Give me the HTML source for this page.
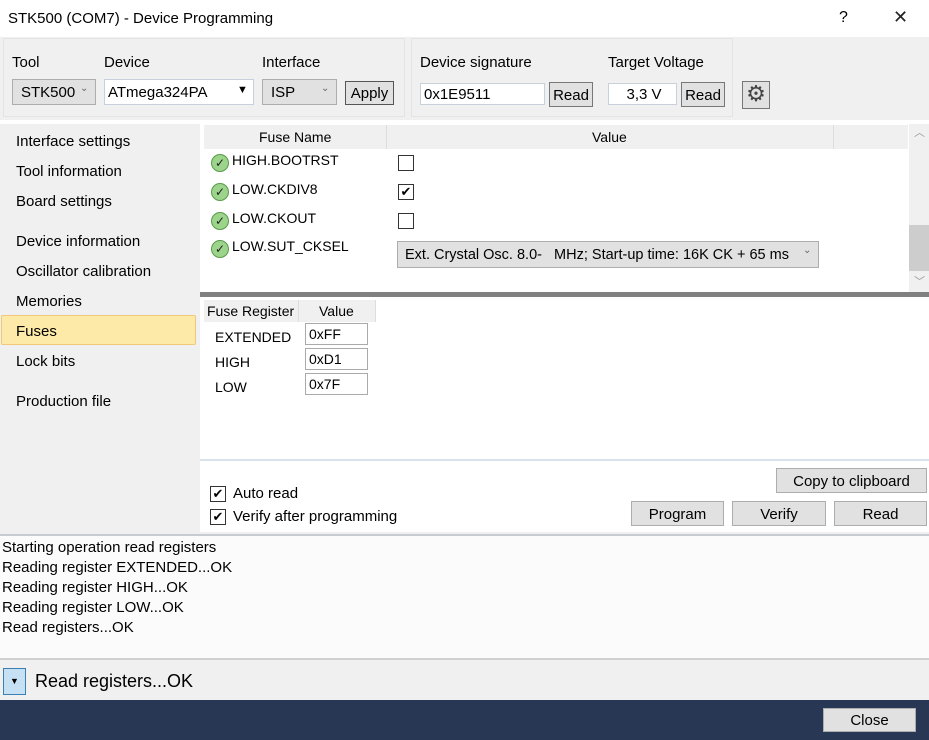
<!DOCTYPE html><html><head><style>
*{margin:0;padding:0;box-sizing:border-box}
body{width:929px;height:740px;position:relative;background:#f0f0f0;font-family:"Liberation Sans",sans-serif;font-size:15px;color:#000;overflow:hidden}
.a{position:absolute;white-space:nowrap}
.s{font-size:14px}
.btn{position:absolute;background:#e1e1e1;border:1px solid #adadad;text-align:center;font-size:15px}
.inp{position:absolute;background:#fff;border:1px solid #c8d0dc;padding-left:3px;font-size:14px}
.cb{position:absolute;width:16px;height:16px;border:1px solid #333;background:#fff;font-size:13px;line-height:14px;text-align:center}
.ok{position:absolute;width:18px;height:18px;border-radius:50%;background:#9bd48a;border:1px solid #5a9a4a;font-size:12px;line-height:16px;text-align:center;color:#222}
</style></head><body>
<div class="a" style="left:0;top:0;width:929px;height:37px;background:#fff"></div>
<div class="a" style="left:8px;top:10px">STK500 (COM7) - Device Programming</div>
<div class="a" style="left:839px;top:9px;font-size:16px">?</div>
<div class="a" style="left:893px;top:7px;font-size:18px;font-weight:300;color:#222">✕</div>

<div class="a" style="left:3px;top:38px;width:402px;height:79px;border:1px solid #e4e4e4"></div>
<div class="a" style="left:411px;top:38px;width:322px;height:79px;border:1px solid #e4e4e4"></div>
<div class="a" style="left:0;top:120px;width:929px;height:4px;background:#fff"></div>
<div class="a" style="left:12px;top:54px">Tool</div>
<div class="a" style="left:104px;top:54px">Device</div>
<div class="a" style="left:262px;top:54px">Interface</div>
<div class="a" style="left:420px;top:54px">Device signature</div>
<div class="a" style="left:608px;top:54px">Target Voltage</div>
<div class="btn" style="left:12px;top:79px;width:84px;height:26px;text-align:left;padding:4px 0 0 8px">STK500 <span style="position:absolute;left:67px;top:3px;font-size:10px;color:#666">⌄</span></div>
<div class="inp" style="left:104px;top:79px;width:150px;height:26px;padding-top:4px;font-size:15px">ATmega324PA<span style="position:absolute;left:132px;top:4px;font-size:11px">▼</span></div>
<div class="btn" style="left:262px;top:79px;width:75px;height:26px;text-align:left;padding:4px 0 0 8px">ISP<span style="position:absolute;left:58px;top:3px;font-size:10px;color:#666">⌄</span></div>
<div class="btn" style="left:345px;top:81px;width:49px;height:24px;border-color:#555;padding-top:3px">Apply</div>
<div class="inp" style="left:420px;top:83px;width:125px;height:22px;padding-top:2px;font-size:15px">0x1E9511</div>
<div class="btn" style="left:549px;top:82px;width:44px;height:25px;border-color:#777;padding-top:4px">Read</div>
<div class="inp" style="left:608px;top:83px;width:69px;height:22px;padding-top:2px;text-align:center;font-size:15px">3,3 V</div>
<div class="btn" style="left:681px;top:82px;width:44px;height:25px;border-color:#777;padding-top:4px">Read</div>
<div class="btn" style="left:742px;top:81px;width:28px;height:28px;border-color:#777;font-size:22px;line-height:24px;color:#444">⚙</div>

<div class="a" style="left:16px;top:133px">Interface settings</div>
<div class="a" style="left:16px;top:163px">Tool information</div>
<div class="a" style="left:16px;top:193px">Board settings</div>
<div class="a" style="left:16px;top:233px">Device information</div>
<div class="a" style="left:16px;top:263px">Oscillator calibration</div>
<div class="a" style="left:16px;top:293px">Memories</div>
<div class="a" style="left:1px;top:315px;width:195px;height:30px;background:#fde9a8;border:1px solid #f0c878;border-radius:2px"></div>
<div class="a" style="left:16px;top:323px">Fuses</div>
<div class="a" style="left:16px;top:353px">Lock bits</div>
<div class="a" style="left:16px;top:393px">Production file</div>

<div class="a" style="left:200px;top:124px;width:729px;height:408px;background:#fff"></div>
<div class="a" style="left:204px;top:125px;width:704px;height:24px;background:#f0f0f0"></div>
<div class="a" style="left:386px;top:125px;width:1px;height:24px;background:#ddd"></div>
<div class="a" style="left:833px;top:125px;width:1px;height:24px;background:#ddd"></div>
<div class="a s" style="left:259px;top:129px">Fuse Name</div>
<div class="a s" style="left:592px;top:129px">Value</div>
<div class="a" style="left:909px;top:124px;width:20px;height:168px;background:#f0f0f0"></div>
<div class="a" style="left:909px;top:225px;width:20px;height:46px;background:#cdcdcd"></div>
<div class="a" style="left:914px;top:124px;font-size:11px;color:#999">︿</div>
<div class="a" style="left:914px;top:273px;font-size:11px;color:#999">﹀</div>

<div class="ok" style="left:211px;top:154px">✓</div><div class="a s" style="left:232px;top:152px">HIGH.BOOTRST</div>
<div class="ok" style="left:211px;top:183px">✓</div><div class="a s" style="left:232px;top:181px">LOW.CKDIV8</div>
<div class="ok" style="left:211px;top:212px">✓</div><div class="a s" style="left:232px;top:210px">LOW.CKOUT</div>
<div class="ok" style="left:211px;top:240px">✓</div><div class="a s" style="left:232px;top:238px">LOW.SUT_CKSEL</div>
<div class="cb" style="left:398px;top:155px"></div>
<div class="cb" style="left:398px;top:184px">✔</div>
<div class="cb" style="left:398px;top:213px"></div>
<div class="btn" style="left:397px;top:241px;width:422px;height:27px;text-align:left;padding:5px 0 0 7px;font-size:14.5px">Ext. Crystal Osc. 8.0-&nbsp;&nbsp; MHz; Start-up time: 16K CK + 65 ms<span style="position:absolute;left:405px;top:3px;font-size:10px;color:#666">⌄</span></div>

<div class="a" style="left:200px;top:292px;width:729px;height:5px;background:#808080"></div>
<div class="a" style="left:204px;top:300px;width:171px;height:22px;background:#f0f0f0"></div>
<div class="a" style="left:298px;top:300px;width:1px;height:22px;background:#ddd"></div>
<div class="a" style="left:375px;top:300px;width:1px;height:22px;background:#ddd"></div>
<div class="a s" style="left:207px;top:303px">Fuse Register</div>
<div class="a s" style="left:319px;top:303px">Value</div>
<div class="a s" style="left:215px;top:329px">EXTENDED</div>
<div class="a s" style="left:215px;top:354px">HIGH</div>
<div class="a s" style="left:215px;top:379px">LOW</div>
<div class="inp" style="left:305px;top:323px;width:63px;height:22px;border-color:#aaa;padding-top:2px">0xFF</div>
<div class="inp" style="left:305px;top:348px;width:63px;height:22px;border-color:#aaa;padding-top:2px">0xD1</div>
<div class="inp" style="left:305px;top:373px;width:63px;height:22px;border-color:#aaa;padding-top:2px">0x7F</div>

<div class="a" style="left:200px;top:459px;width:729px;height:2px;background:#d8e2ec"></div>
<div class="cb" style="left:210px;top:486px">✔</div><div class="a" style="left:233px;top:485px">Auto read</div>
<div class="cb" style="left:210px;top:509px">✔</div><div class="a" style="left:233px;top:508px">Verify after programming</div>
<div class="btn" style="left:776px;top:468px;width:151px;height:25px;padding-top:4px">Copy to clipboard</div>
<div class="btn" style="left:631px;top:501px;width:93px;height:25px;padding-top:4px">Program</div>
<div class="btn" style="left:732px;top:501px;width:94px;height:25px;padding-top:4px">Verify</div>
<div class="btn" style="left:834px;top:501px;width:93px;height:25px;padding-top:4px">Read</div>

<div class="a" style="left:0;top:534px;width:929px;height:126px;background:#fbfbfb;border-top:2px solid #c8ccd2;border-bottom:2px solid #d0d0d0"></div>
<div class="a" style="left:2px;top:539px">Starting operation read registers</div>
<div class="a" style="left:2px;top:559px">Reading register EXTENDED...OK</div>
<div class="a" style="left:2px;top:579px">Reading register HIGH...OK</div>
<div class="a" style="left:2px;top:599px">Reading register LOW...OK</div>
<div class="a" style="left:2px;top:619px">Read registers...OK</div>

<div class="a" style="left:3px;top:668px;width:23px;height:27px;background:#c5e1f3;border:1px solid #3c7fb1;font-size:9px;text-align:center;line-height:25px">▼</div>
<div class="a" style="left:35px;top:671px;font-size:18px">Read registers...OK</div>

<div class="a" style="left:0;top:700px;width:929px;height:40px;background:#283754"></div>
<div class="btn" style="left:823px;top:708px;width:93px;height:24px;padding-top:3px">Close</div>
</body></html>
